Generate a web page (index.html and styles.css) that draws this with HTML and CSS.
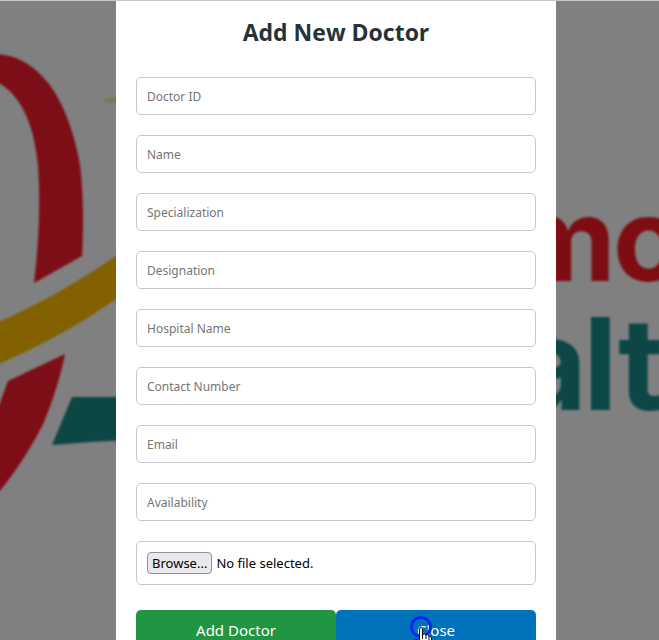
FILE: index.html
```html
<!DOCTYPE html>
<html lang="en">
<head>
<meta charset="utf-8">
<meta name="viewport" content="width=device-width, initial-scale=1">
<title>Add New Doctor</title>
<link rel="stylesheet" href="styles.css">
</head>
<body>
<svg class="backdrop" viewBox="0 0 659 640" preserveAspectRatio="xMidYMin slice" aria-hidden="true">
  <g class="backdrop-art">
    <path fill="#7d0d16" d="M-10 54C19 53 36 68 49 84C65 105 75 136 80 165C83 190 84 220 82 256L34 283C38 253 41 207 38 166C35 135 28 113 15 97Q8 87 -10 78Z"/>
    <path fill="#836000" d="M-10 326C40 304 78 282 116 256L150 232V276L116 299C78 326 38 347 -10 368Z"/>
    <path fill="#7d0d16" d="M65 354L8 381L-10 430V502C14 477 36 439 44 422C53 400 60 378 65 354Z"/>
    <path fill="#0c4746" d="M72 397H150V439Q100 441 52 445Z"/>
    <path fill="#75702f" opacity=".6" d="M102 102Q108 97 118 98V103Z"/>
    <text class="art-text" fill="#7d0d12" x="510 613" y="281">mo</text>
    <text class="art-text art-text-tall" fill="#0c4746" x="513 583 618" y="410">alt</text>
  </g>
</svg>
<main class="overlay">
  <form class="modal">
    <h1 class="title">Add New Doctor</h1>
    <div class="fields">
      <input class="field" type="text" placeholder="Doctor ID" aria-label="Doctor ID">
      <input class="field" type="text" placeholder="Name" aria-label="Name">
      <input class="field" type="text" placeholder="Specialization" aria-label="Specialization">
      <input class="field" type="text" placeholder="Designation" aria-label="Designation">
      <input class="field" type="text" placeholder="Hospital Name" aria-label="Hospital Name">
      <input class="field" type="tel" placeholder="Contact Number" aria-label="Contact Number">
      <input class="field" type="email" placeholder="Email" aria-label="Email">
      <input class="field" type="text" placeholder="Availability" aria-label="Availability">
      <label class="file" for="photo">
        <span class="browse">Browse...</span>
        <span>No file selected.</span>
        <input class="file-input" id="photo" type="file">
      </label>
    </div>
    <div class="actions">
      <button class="button add" type="submit">Add Doctor</button>
      <button class="button close" type="button">Close
        <svg class="pointer" viewBox="0 0 30 36" aria-hidden="true">
          <circle cx="12" cy="13" r="9.5" fill="none" stroke="#0828e8" stroke-width="3"/>
          <path fill="#fff" stroke="#000" d="M10.500 14.500Q12 12.500 13.500 14.500V20.500Q15.500 19 17 21Q19 19.500 20 22Q22.500 21.500 22.500 24V29L20 35H11L5.500 27.500Q4.500 25 7 25L10.500 28Z"/>
          <path stroke="#000" d="M13.500 20V25M17 21V25M20 22V26"/>
        </svg>
      </button>
    </div>
  </form>
</main>
</body>
</html>
```
FILE: styles.css
```css
* {
  box-sizing: border-box;
}

body {
  margin: 0;
  overflow: hidden;
  background: #808080;
  font-family: "Noto Sans", "Open Sans", sans-serif;
}

.backdrop {
  position: fixed;
  inset: 0;
  width: 100%;
  height: 100%;
}

.backdrop-art {
  filter: blur(1px);
}

.art-text {
  font-family: Inter, sans-serif;
  font-size: 116px;
  font-weight: 700;
}

.art-text-tall {
  font-size: 128px;
}

.overlay {
  position: fixed;
  inset: 0;
  display: grid;
  grid-template-columns: 116fr minmax(0, 440px) 103fr;
  overflow: hidden;
  border-top: 1px solid #c8c8c8;
}

.modal {
  grid-column: 2;
  align-self: start;
  padding: 16px 20px 20px;
  background: #fff;
}

.title {
  margin: 0 0 30px;
  color: #263238;
  font-family: "Open Sans", "Noto Sans", sans-serif;
  font-size: 23px;
  font-weight: 700;
  line-height: 30px;
  text-align: center;
}

.fields {
  display: grid;
  gap: 20px;
}

.field,
.file {
  width: 100%;
  border: 1px solid #c8c8ca;
  border-radius: 5px;
  background: #fff;
  font-family: inherit;
}

.field {
  height: 38px;
  padding: 0 10px;
  font-size: 12px;
}

.field::placeholder {
  color: #757575;
}

.file {
  position: relative;
  display: flex;
  align-items: center;
  gap: 4px;
  height: 44px;
  padding: 0 10px;
  color: #000;
  font-size: 13px;
}

.browse {
  padding: 0 4px;
  border: 1px solid #8f8f9d;
  border-radius: 4px;
  background: #e9e9ed;
  line-height: 20px;
}

.file-input {
  position: absolute;
  inset: 0;
  width: 100%;
  opacity: 0;
}

.actions {
  display: flex;
  margin-top: 25px;
}

.button {
  position: relative;
  flex: 1;
  height: 40px;
  padding: 0;
  border: 0;
  border-radius: 5px;
  color: #fff;
  font-family: inherit;
  font-size: 15px;
}

.add {
  background: #219642;
}

.close {
  background: #0072bc;
}

.pointer {
  position: absolute;
  top: 4px;
  left: 73px;
  width: 30px;
  height: 36px;
}
```
